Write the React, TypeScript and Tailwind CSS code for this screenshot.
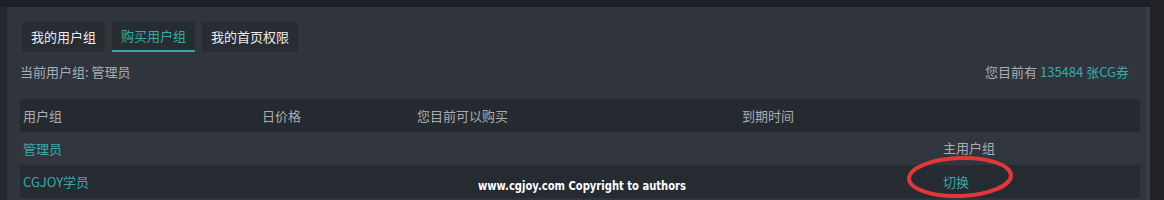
import React from "react";

const font = { fontFamily: '"Noto Sans CJK SC", "Noto Sans", "Liberation Sans", sans-serif' };

function Row({ cells, bg, color }: { cells: string[]; bg: string; color: string[] }) {
  return (
    <div className={`grid grid-cols-[239px_155px_325px_201px_1fr] h-[33px] items-center ${bg}`}>
      {cells.map((c, i) => (
        <div key={i} className={`pl-[3px] text-[13px] leading-none ${color[i]}`}>
          {c}
        </div>
      ))}
    </div>
  );
}

export default function App() {
  return (
    <div className="w-[1164px] h-[200px] overflow-hidden bg-[#222327] relative" style={font}>
      <div className="h-[7px] bg-[#1d2024] w-[1151px]" />
      <div className="flex h-[193px]">
        <div className="w-[8px] bg-[#252a31] border-r border-[#2b3038]" />
        <div className="w-[1138px] bg-[#30353d] pl-[12px] pr-[6px]">
          <div className="flex gap-[7px] mt-[15px] ml-[2px]">
            <div className="h-[30px] px-[9px] flex items-center bg-[#282c33] text-[#ececec] text-[13px]">我的用户组</div>
            <div className="h-[30px] px-[9px] flex items-center bg-[#272c31] text-[#3aa9ab] text-[13px] border-b-2 border-[#3aa6a8]">购买用户组</div>
            <div className="h-[30px] px-[9px] flex items-center bg-[#282c33] text-[#ececec] text-[13px]">我的首页权限</div>
          </div>
          <div className="flex justify-between items-center h-[16px] mt-[12px] text-[13px] text-[#a9adb2]">
            <span>当前用户组: 管理员</span>
            <span className="mr-[11px]">
              您目前有 <span className="text-[#3aa9ab]">135484 张CG券</span>
            </span>
          </div>
          <div className="mt-[19px]">
            <Row
              cells={["用户组", "日价格", "您目前可以购买", "到期时间", ""]}
              bg="bg-[#252a31]"
              color={["text-[#a9adb2]", "text-[#a9adb2]", "text-[#a9adb2]", "text-[#a9adb2]", ""]}
            />
            <Row
              cells={["管理员", "", "", "", ""]}
              bg="bg-[#31363e]"
              color={["text-[#3aa9ab]", "", "", "", ""]}
            />
            <Row
              cells={["CGJOY学员", "", "", "", ""]}
              bg="bg-[#262a31]"
              color={["text-[#3aa9ab]", "", "", "", ""]}
            />
          </div>
        </div>
        <div className="w-[4px] bg-[#393e46]" />
      </div>
      <div className="absolute left-[943px] top-[141px] text-[13px] leading-none text-[#a9adb2]">主用户组</div>
      <div className="absolute left-[943px] top-[175px] text-[13px] leading-none text-[#3aa9ab]">切换</div>
      <svg className="absolute left-0 top-0" width="1164" height="200">
        <ellipse cx="960" cy="177" rx="51" ry="19" fill="none" stroke="#e2373a" strokeWidth="4" transform="rotate(-2 960 177)" />
      </svg>
      <div
        className="absolute left-[478px] top-[179px] text-[13px] leading-none font-bold text-white origin-left scale-x-[0.77] whitespace-nowrap"
        style={{ fontFamily: '"DejaVu Sans", sans-serif' }}
      >
        www.cgjoy.com Copyright to authors
      </div>
    </div>
  );
}
